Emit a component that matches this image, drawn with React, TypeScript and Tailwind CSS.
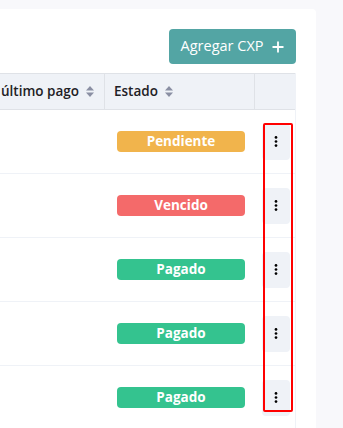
import React from "react";

const font = { fontFamily: '"Open Sans", "Liberation Sans", sans-serif' };

function SortIcon() {
  return (
    <svg width="8" height="11" viewBox="0 0 8 11" className="ml-[7px] shrink-0">
      <path d="M0 4.5 L4 0 L8 4.5 Z" fill="#8a8fa3" />
      <path d="M0 6.5 L4 11 L8 6.5 Z" fill="#8a8fa3" />
    </svg>
  );
}

function Dots() {
  return (
    <svg width="4" height="11" viewBox="0 0 4 11">
      <circle cx="2" cy="1.4" r="1.35" fill="#000" />
      <circle cx="2" cy="5.5" r="1.35" fill="#000" />
      <circle cx="2" cy="9.6" r="1.35" fill="#000" />
    </svg>
  );
}

const rows = [
  { label: "Pendiente", cls: "bg-[#f1b44c]" },
  { label: "Vencido", cls: "bg-[#f46a6a]" },
  { label: "Pagado", cls: "bg-[#34c38f]" },
  { label: "Pagado", cls: "bg-[#34c38f]" },
  { label: "Pagado", cls: "bg-[#34c38f]" },
];

export default function App() {
  return (
    <div className="relative w-[343px] h-[428px] overflow-hidden bg-[#f8f8fb]" style={font}>
      <div className="mt-[9px] w-[316px] bg-white rounded-tr-[4px] pt-[20px] pr-[20px] h-[500px]">
        <div className="flex justify-end">
          <button className="flex items-center h-[35px] w-[127px] justify-center gap-[9px] rounded-[4px] bg-[#53a5a4] text-white text-[14.5px] leading-none">
            <span>Agregar CXP</span>
            <svg width="12" height="12" viewBox="0 0 12 12">
              <path d="M6 0.5 V11.5 M0.5 6 H11.5" stroke="#fff" strokeWidth="1.8" />
            </svg>
          </button>
        </div>
        <div className="mt-[9px] border-r border-[#eff2f7]">
          <div className="grid grid-cols-[105px_150px_41px] h-[37px] bg-[#eff2f7] border-y border-[#dfe2e7] text-[13.5px] font-semibold text-[#1e2125]">
            <div className="flex items-center pl-[1px] border-r border-[#dfe2e7]">
              <span>último pago</span>
              <SortIcon />
            </div>
            <div className="flex items-center pl-[9px] border-r border-[#dfe2e7]">
              <span>Estado</span>
              <SortIcon />
            </div>
            <div />
          </div>
          {rows.map((r, i) => (
            <div key={i} className="grid grid-cols-[105px_150px_41px] h-[64px] border-b border-[#eff2f7] items-center">
              <div />
              <div className="pl-[12px]">
                <div className={`h-[21px] w-[128px] rounded-[4px] ${r.cls} flex items-center justify-center text-white text-[13.5px] font-bold`}>
                  {r.label}
                </div>
              </div>
              <div className="pl-[7px]">
                <div className="w-[28px] h-[36px] rounded-[4px] bg-[#eff2f7] flex items-center justify-center">
                  <Dots />
                </div>
              </div>
            </div>
          ))}
        </div>
      </div>
      <div className="absolute left-[263px] top-[123px] w-[30px] h-[289px] border-[2.5px] border-[#ff0000] rounded-[2px]" />
    </div>
  );
}
